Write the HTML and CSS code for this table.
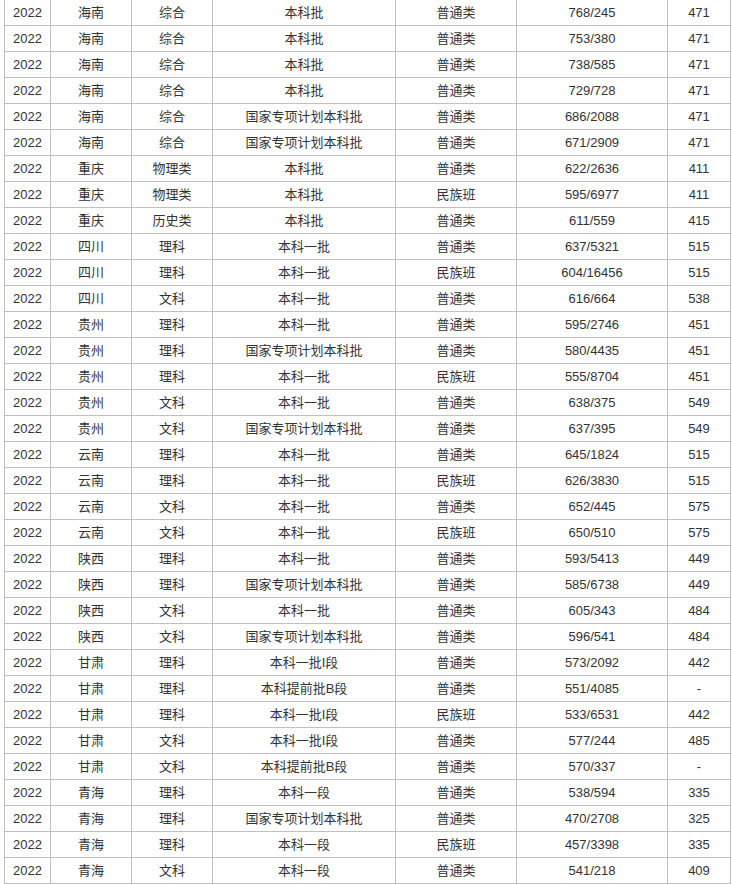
FILE: index.html
```html
<!DOCTYPE html>
<html lang="zh-CN">
<head>
<meta charset="utf-8">
<link rel="stylesheet" href="styles.css">
</head>
<body>
<table class="score-table">
<colgroup>
<col class="c1"><col class="c2"><col class="c3"><col class="c4"><col class="c5"><col class="c6"><col class="c7">
</colgroup>
<tbody>
<tr><td>2022</td><td>海南</td><td>综合</td><td>本科批</td><td>普通类</td><td>768/245</td><td>471</td></tr>
<tr><td>2022</td><td>海南</td><td>综合</td><td>本科批</td><td>普通类</td><td>753/380</td><td>471</td></tr>
<tr><td>2022</td><td>海南</td><td>综合</td><td>本科批</td><td>普通类</td><td>738/585</td><td>471</td></tr>
<tr><td>2022</td><td>海南</td><td>综合</td><td>本科批</td><td>普通类</td><td>729/728</td><td>471</td></tr>
<tr><td>2022</td><td>海南</td><td>综合</td><td>国家专项计划本科批</td><td>普通类</td><td>686/2088</td><td>471</td></tr>
<tr><td>2022</td><td>海南</td><td>综合</td><td>国家专项计划本科批</td><td>普通类</td><td>671/2909</td><td>471</td></tr>
<tr><td>2022</td><td>重庆</td><td>物理类</td><td>本科批</td><td>普通类</td><td>622/2636</td><td>411</td></tr>
<tr><td>2022</td><td>重庆</td><td>物理类</td><td>本科批</td><td>民族班</td><td>595/6977</td><td>411</td></tr>
<tr><td>2022</td><td>重庆</td><td>历史类</td><td>本科批</td><td>普通类</td><td>611/559</td><td>415</td></tr>
<tr><td>2022</td><td>四川</td><td>理科</td><td>本科一批</td><td>普通类</td><td>637/5321</td><td>515</td></tr>
<tr><td>2022</td><td>四川</td><td>理科</td><td>本科一批</td><td>民族班</td><td>604/16456</td><td>515</td></tr>
<tr><td>2022</td><td>四川</td><td>文科</td><td>本科一批</td><td>普通类</td><td>616/664</td><td>538</td></tr>
<tr><td>2022</td><td>贵州</td><td>理科</td><td>本科一批</td><td>普通类</td><td>595/2746</td><td>451</td></tr>
<tr><td>2022</td><td>贵州</td><td>理科</td><td>国家专项计划本科批</td><td>普通类</td><td>580/4435</td><td>451</td></tr>
<tr><td>2022</td><td>贵州</td><td>理科</td><td>本科一批</td><td>民族班</td><td>555/8704</td><td>451</td></tr>
<tr><td>2022</td><td>贵州</td><td>文科</td><td>本科一批</td><td>普通类</td><td>638/375</td><td>549</td></tr>
<tr><td>2022</td><td>贵州</td><td>文科</td><td>国家专项计划本科批</td><td>普通类</td><td>637/395</td><td>549</td></tr>
<tr><td>2022</td><td>云南</td><td>理科</td><td>本科一批</td><td>普通类</td><td>645/1824</td><td>515</td></tr>
<tr><td>2022</td><td>云南</td><td>理科</td><td>本科一批</td><td>民族班</td><td>626/3830</td><td>515</td></tr>
<tr><td>2022</td><td>云南</td><td>文科</td><td>本科一批</td><td>普通类</td><td>652/445</td><td>575</td></tr>
<tr><td>2022</td><td>云南</td><td>文科</td><td>本科一批</td><td>民族班</td><td>650/510</td><td>575</td></tr>
<tr><td>2022</td><td>陕西</td><td>理科</td><td>本科一批</td><td>普通类</td><td>593/5413</td><td>449</td></tr>
<tr><td>2022</td><td>陕西</td><td>理科</td><td>国家专项计划本科批</td><td>普通类</td><td>585/6738</td><td>449</td></tr>
<tr><td>2022</td><td>陕西</td><td>文科</td><td>本科一批</td><td>普通类</td><td>605/343</td><td>484</td></tr>
<tr><td>2022</td><td>陕西</td><td>文科</td><td>国家专项计划本科批</td><td>普通类</td><td>596/541</td><td>484</td></tr>
<tr><td>2022</td><td>甘肃</td><td>理科</td><td>本科一批I段</td><td>普通类</td><td>573/2092</td><td>442</td></tr>
<tr><td>2022</td><td>甘肃</td><td>理科</td><td>本科提前批B段</td><td>普通类</td><td>551/4085</td><td>-</td></tr>
<tr><td>2022</td><td>甘肃</td><td>理科</td><td>本科一批I段</td><td>民族班</td><td>533/6531</td><td>442</td></tr>
<tr><td>2022</td><td>甘肃</td><td>文科</td><td>本科一批I段</td><td>普通类</td><td>577/244</td><td>485</td></tr>
<tr><td>2022</td><td>甘肃</td><td>文科</td><td>本科提前批B段</td><td>普通类</td><td>570/337</td><td>-</td></tr>
<tr><td>2022</td><td>青海</td><td>理科</td><td>本科一段</td><td>普通类</td><td>538/594</td><td>335</td></tr>
<tr><td>2022</td><td>青海</td><td>理科</td><td>国家专项计划本科批</td><td>普通类</td><td>470/2708</td><td>325</td></tr>
<tr><td>2022</td><td>青海</td><td>理科</td><td>本科一段</td><td>民族班</td><td>457/3398</td><td>335</td></tr>
<tr><td>2022</td><td>青海</td><td>文科</td><td>本科一段</td><td>普通类</td><td>541/218</td><td>409</td></tr>
</tbody>
</table>
</body>
</html>
```

FILE: styles.css
```css
html, body {
  margin: 0;
  padding: 0;
  background: #ffffff;
}
body {
  overflow: hidden;
}
.score-table {
  border-collapse: collapse;
  table-layout: fixed;
  width: 726px;
  margin: -1px 0 0 4px;
  font-family: "Liberation Sans", "Noto Sans CJK SC", sans-serif;
  font-size: 13px;
  color: #333333;
}
.score-table td {
  border: 1px solid #c0c0c0;
  height: 25px;
  padding: 0;
  text-align: center;
  vertical-align: middle;
  line-height: 16px;
  white-space: nowrap;
}
.c1 { width: 46px; }
.c2 { width: 81px; }
.c3 { width: 81px; }
.c4 { width: 183px; }
.c5 { width: 121px; }
.c6 { width: 151px; }
.c7 { width: 63px; }
```
